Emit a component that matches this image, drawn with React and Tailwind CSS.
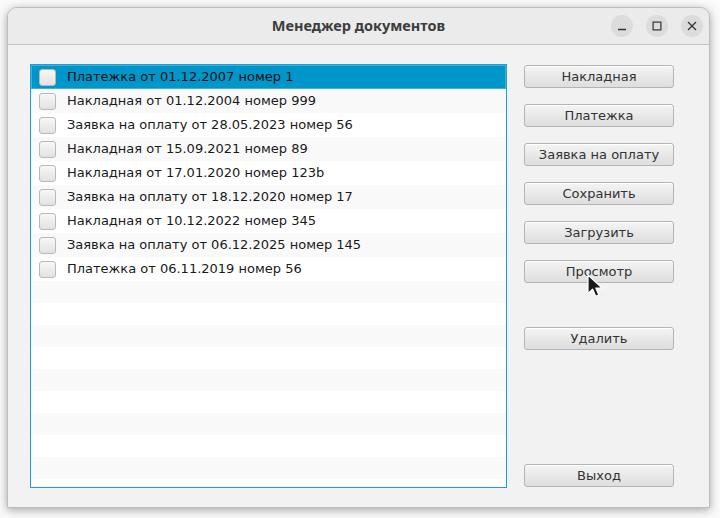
const docs = [
  'Платежка от 01.12.2007 номер 1',
  'Накладная от 01.12.2004 номер 999',
  'Заявка на оплату от 28.05.2023 номер 56',
  'Накладная от 15.09.2021 номер 89',
  'Накладная от 17.01.2020 номер 123b',
  'Заявка на оплату от 18.12.2020 номер 17',
  'Накладная от 10.12.2022 номер 345',
  'Заявка на оплату от 06.12.2025 номер 145',
  'Платежка от 06.11.2019 номер 56',
];

function Btn({ children, className = '' }) {
  return (
    <button
      className={
        'h-[23px] w-full rounded-[3px] border border-[#b4b4b4] bg-gradient-to-b from-[#f4f4f4] to-[#dedede] text-[13px] leading-[21px] text-[#333] shadow-[inset_0_1px_0_#fff] ' +
        className
      }
    >
      {children}
    </button>
  );
}

function Checkbox() {
  return (
    <div className="h-[17px] w-[17px] shrink-0 rounded-[3px] border border-[#b9b9b9] bg-gradient-to-b from-[#f7f7f7] to-[#e2e2e2]" />
  );
}

export default function App() {
  const empty = Array.from({ length: 10 });

  return (
    <div
      className="h-[518px] w-[720px] bg-[#fafafa] pl-[7px] pt-[7px]"
      style={{ fontFamily: '"DejaVu Sans", sans-serif' }}
    >
      <div className="relative flex h-[501px] w-[703px] flex-col overflow-hidden rounded-t-[10px] border border-[#bdbdbd] bg-[#f2f2f2] shadow-[0_2px_10px_rgba(0,0,0,0.35)]">
        {/* Title bar */}
        <div className="relative flex h-[37px] shrink-0 items-center justify-center border-b border-[#c4c4c4] bg-[#ebebeb]">
          <span
            className="text-[14.5px] font-bold text-[#3d3d3d]"
            style={{ fontFamily: '"Noto Sans", sans-serif' }}
          >
            Менеджер документов
          </span>
          <div className="absolute right-[6px] top-[7px] flex gap-[13px]">
            <div className="flex h-[22px] w-[22px] items-center justify-center rounded-full bg-[#dcdcdc]">
              <svg width="10" height="10" viewBox="0 0 10 10">
                <path d="M1 8.5h8" stroke="#333" strokeWidth="1.3" />
              </svg>
            </div>
            <div className="flex h-[22px] w-[22px] items-center justify-center rounded-full bg-[#dcdcdc]">
              <svg width="10" height="10" viewBox="0 0 10 10">
                <rect x="1.1" y="1.1" width="7.8" height="7.8" fill="none" stroke="#333" strokeWidth="1.2" />
              </svg>
            </div>
            <div className="flex h-[22px] w-[22px] items-center justify-center rounded-full bg-[#dcdcdc]">
              <svg width="10" height="10" viewBox="0 0 10 10">
                <path d="M1 1l8 8M9 1l-8 8" stroke="#333" strokeWidth="1.3" />
              </svg>
            </div>
          </div>
        </div>

        {/* Body */}
        <div className="flex flex-1 gap-[17px] pb-[19px] pl-[22px] pr-[35px] pt-[19px]">
          {/* List */}
          <div className="h-[424px] w-[477px] overflow-hidden border border-[#1a9fd6] bg-white">
            {docs.map((d, i) => (
              <div
                key={i}
                className={
                  i === 0
                    ? 'flex h-[24px] items-center gap-[11px] bg-[#0096c9] pl-[8px] text-[13px] text-[#111] shadow-[inset_0_0_0_1px_#3cb0dd]'
                    : i % 2 === 1
                      ? 'flex h-[24px] items-center gap-[11px] bg-[#f9f9f9] pl-[8px] text-[13px] text-[#1a1a1a]'
                      : 'flex h-[24px] items-center gap-[11px] bg-white pl-[8px] text-[13px] text-[#1a1a1a]'
                }
              >
                <Checkbox />
                <span>{d}</span>
              </div>
            ))}
            {empty.map((_, i) => (
              <div
                key={'e' + i}
                className={i % 2 === 0 ? 'h-[22px] bg-[#f9f9f9]' : 'h-[22px] bg-white'}
              />
            ))}
          </div>

          {/* Buttons */}
          <div className="mt-[1px] flex h-[423px] w-[150px] flex-col">
            <div className="flex flex-col gap-[16px]">
              <Btn>Накладная</Btn>
              <Btn>Платежка</Btn>
              <Btn>Заявка на оплату</Btn>
              <Btn>Сохранить</Btn>
              <Btn>Загрузить</Btn>
              <Btn>Просмотр</Btn>
            </div>
            <Btn className="mt-[44px]">Удалить</Btn>
            <Btn className="mt-auto mb-[1px]">Выход</Btn>
          </div>
        </div>

        {/* Mouse cursor */}
        <svg
          className="absolute left-[579px] top-[266px]"
          width="16"
          height="24"
          viewBox="0 0 16 24"
        >
          <path
            d="M1 1v18.5l4.6-4.4 3.1 7.2 3.1-1.3-3-7h6.3z"
            fill="#1a1a1a"
            stroke="#fff"
            strokeWidth="1.2"
            strokeLinejoin="round"
          />
        </svg>
      </div>
    </div>
  );
}
